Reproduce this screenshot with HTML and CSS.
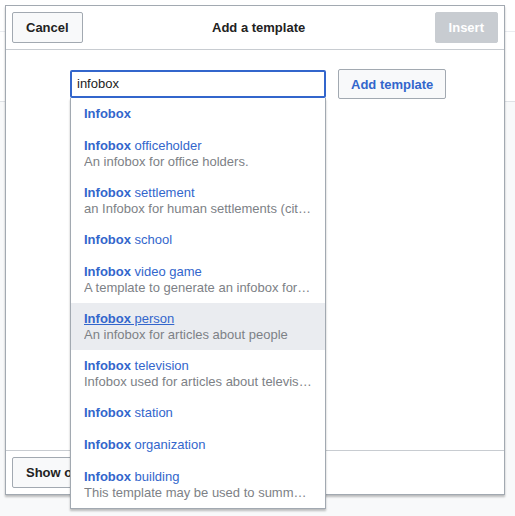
FILE: index.html
```html
<!DOCTYPE html>
<html lang="en">
<head>
<meta charset="utf-8">
<title>Add a template</title>
<link rel="stylesheet" href="styles.css">
</head>
<body>
<div class="dialog">
  <div class="head">
    <button class="btn">Cancel</button>
    <div class="title">Add a template</div>
    <button class="btn btn-disabled">Insert</button>
  </div>
  <div class="body">
    <div class="search-row">
      <div class="combo">
        <div class="input">infobox</div>
        <ul class="menu">
          <li class="item"><div class="name"><b>Infobox</b></div></li>
          <li class="item"><div class="name"><b>Infobox</b> officeholder</div><div class="desc">An infobox for office holders.</div></li>
          <li class="item"><div class="name"><b>Infobox</b> settlement</div><div class="desc">an Infobox for human settlements (cities, towns, villages, communities)</div></li>
          <li class="item"><div class="name"><b>Infobox</b> school</div></li>
          <li class="item"><div class="name"><b>Infobox</b> video game</div><div class="desc">A template to generate an infobox for a video game</div></li>
          <li class="item item-hover"><div class="name"><b>Infobox</b> person</div><div class="desc">An infobox for articles about people</div></li>
          <li class="item"><div class="name"><b>Infobox</b> television</div><div class="desc">Infobox used for articles about television programs</div></li>
          <li class="item"><div class="name"><b>Infobox</b> station</div></li>
          <li class="item"><div class="name"><b>Infobox</b> organization</div></li>
          <li class="item"><div class="name"><b>Infobox</b> building</div><div class="desc">This template may be used to summarize information about a building</div></li>
        </ul>
      </div>
      <button class="btn btn-primary">Add template</button>
    </div>
  </div>
  <div class="foot">
    <button class="btn">Show options</button>
  </div>
</div>
</body>
</html>
```
FILE: styles.css
```css
* { box-sizing: border-box; }
html, body { margin: 0; padding: 0; }
body {
  font-family: "Liberation Sans", Arial, sans-serif;
  font-size: 13px;
  color: #222;
  height: 516px;
  overflow: hidden;
  background: linear-gradient(to bottom,
    #ffffff 0, #ffffff 31px,
    #eaecf0 31px, #eaecf0 32px,
    #ffffff 32px, #ffffff 101px,
    #dfe2e6 101px, #dfe2e6 102px,
    #f8f9fa 102px);
  padding: 5px 0 0 5px;
}
.dialog {
  width: 500px;
  height: 490px;
  background: #fff;
  border: 1px solid #a2a9b1;
  box-shadow: 0 2px 2px 0 rgba(0,0,0,0.25);
  display: flex;
  flex-direction: column;
}
.head {
  height: 44px;
  flex: none;
  border-bottom: 1px solid #c8ccd1;
  display: flex;
  align-items: flex-start;
  justify-content: space-between;
  padding: 6px 6px 0 6px;
}
.title {
  font-weight: bold;
  font-size: 13px;
  line-height: 31px;
  color: #222;
}
.btn {
  font-family: inherit;
  font-size: 13px;
  font-weight: bold;
  height: 31px;
  padding: 0 13px;
  border: 1px solid #a2a9b1;
  border-radius: 2px;
  background: #f8f9fa;
  color: #222;
  margin: 0;
  white-space: nowrap;
}
.btn-disabled {
  background: #c8ccd1;
  border-color: #c8ccd1;
  color: #fff;
}
.btn-primary {
  color: #36c;
  height: 30px;
  padding: 0 12px;
}
.body {
  height: 400px;
  flex: none;
  padding: 19px 0 0 64px;
}
.search-row {
  display: flex;
  align-items: center;
  gap: 12px;
}
.combo {
  position: relative;
  width: 256px;
  z-index: 2;
}
.input {
  height: 28px;
  border: 2px solid #36c;
  border-radius: 2px;
  padding: 0 5px;
  line-height: 24px;
  font-size: 13px;
  color: #222;
}
.menu {
  position: absolute;
  left: 0;
  top: 28px;
  width: 256px;
  margin: 0;
  padding: 0;
  list-style: none;
  background: #fff;
  border: 1px solid #a2a9b1;
  border-top: 0;
  box-shadow: 0 2px 2px 0 rgba(0,0,0,0.25);
}
.item {
  padding: 8px 13px 8px 13px;
}
.item-hover {
  background: #eaecf0;
}
.name {
  color: #36c;
  line-height: 16px;
  white-space: nowrap;
}
.item-hover .name { text-decoration: underline; }
.desc {
  color: #7d8186;
  line-height: 15px;
  white-space: nowrap;
  overflow: hidden;
  text-overflow: ellipsis;
}
.foot {
  flex: none;
  height: 44px;
  border-top: 1px solid #c8ccd1;
  padding: 6px 6px 0 6px;
}
```
